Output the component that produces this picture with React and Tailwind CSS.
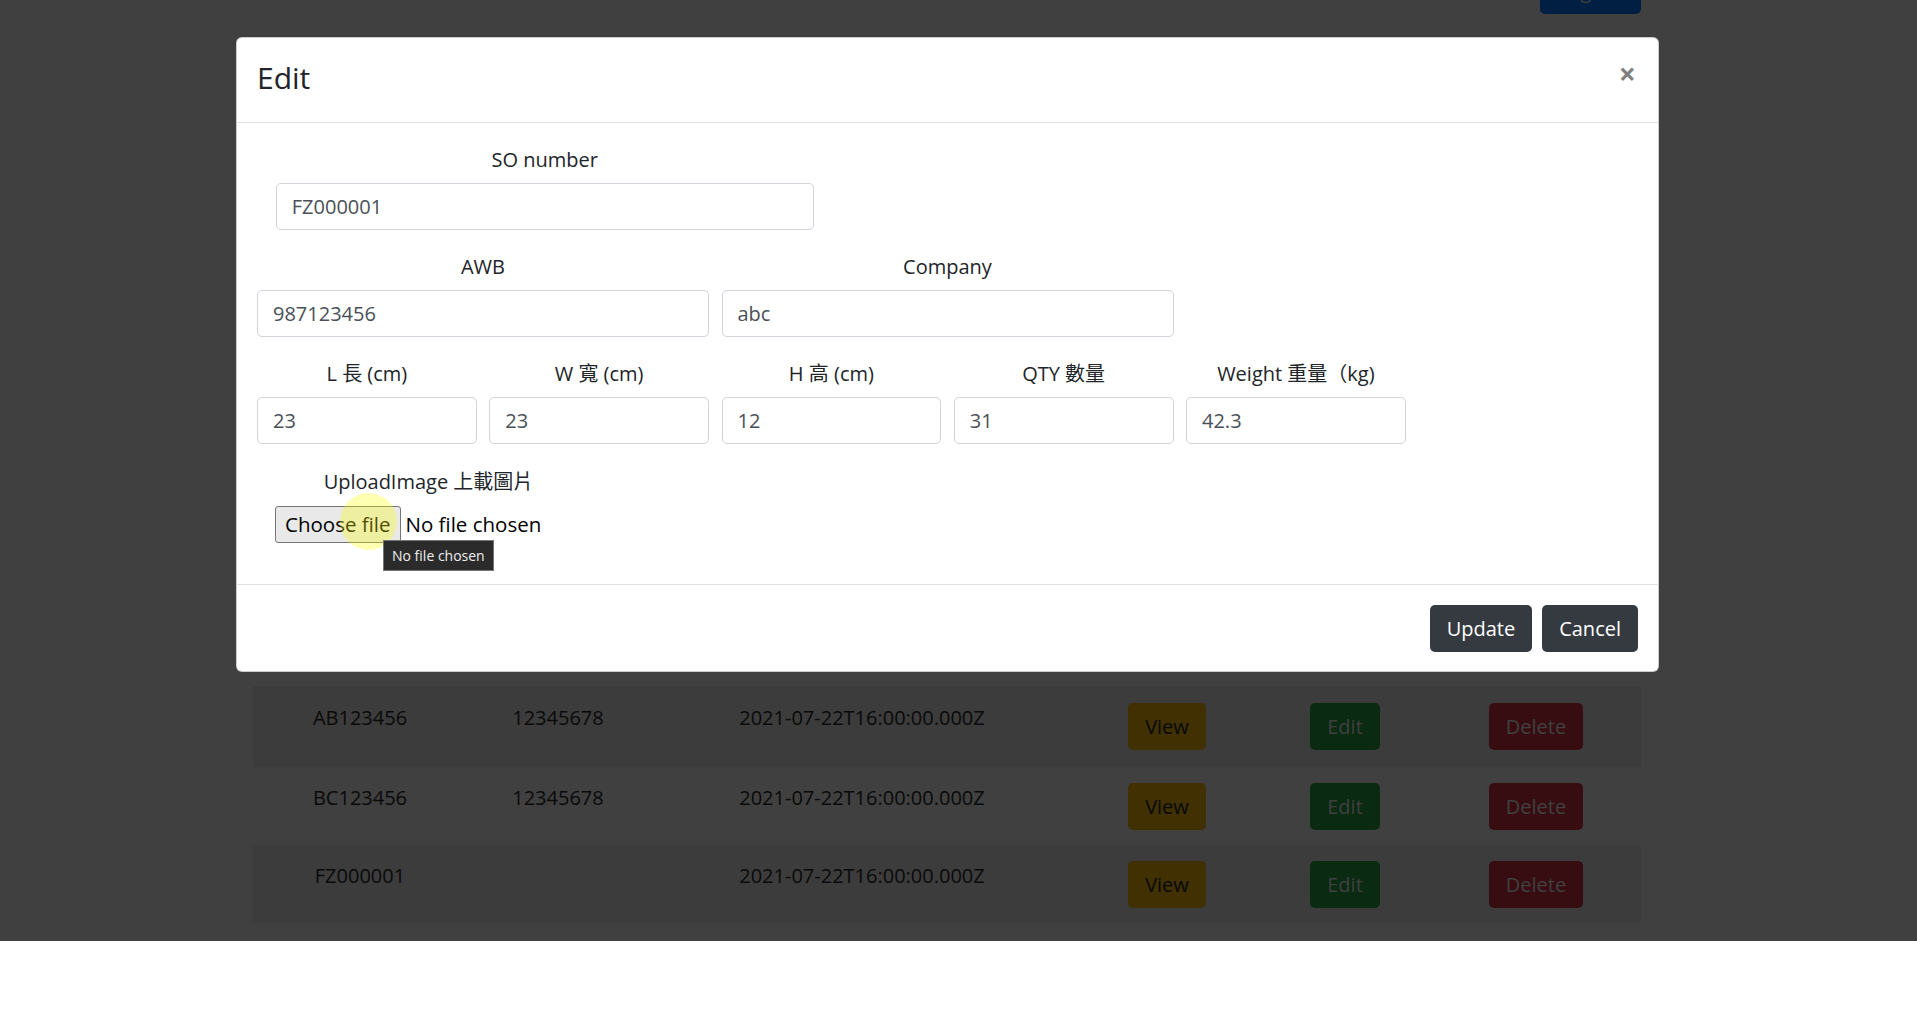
const FONT = "font-['Open_Sans','Noto_Sans_CJK_TC',sans-serif]";

const Field = ({ label, value, width }) => (
  <div className={width}>
    <div className="text-center leading-[30px] pt-[2px] mb-[8px]">{label}</div>
    <input
      readOnly
      value={value}
      className="w-full h-[47px] px-[15px] border border-[#ced4da] rounded-[5px] text-[20px] text-[#495057] bg-white outline-none"
    />
  </div>
);

const rows = [
  { so: 'AB123456', awb: '12345678', row: 'h-[81px] pt-[17px] bg-[#3c3c3c]' },
  { so: 'BC123456', awb: '12345678', row: 'h-[78px] pt-[16px] bg-[#404040]' },
  { so: 'FZ000001', awb: '', row: 'h-[78px] pt-[16px] bg-[#3c3c3c]' }
];

const cols = ['w-[214px]', 'w-[182px]', 'w-[426px]'];

export default function App() {
  return (
    <div className={`h-[1023px] bg-white text-[20px] text-[#212529] ${FONT}`}>
      <div className="h-[941px] bg-[#404040] flex flex-col">
        {/* page header button, mostly hidden above the fold */}
        <div className="h-[14px] flex items-end overflow-hidden pl-[1540px]">
          <button className="shrink-0 w-[101px] h-[47px] rounded-[5px] bg-[#001f42] text-[#404040] leading-[30px]">
            Logout
          </button>
        </div>

        {/* modal */}
        <div className="ml-[236px] mt-[23px] w-[1423px] bg-white border border-black/20 rounded-[6px]">
          <div className="h-[85px] flex justify-between items-start px-5 border-b border-[#dee2e6]">
            <h5 className="mt-[22px] text-[30px] leading-[36px] font-normal">Edit</h5>
            <button className="mt-[21px] mr-[2px] text-[30px] leading-[30px] font-bold text-black/50">
              ×
            </button>
          </div>

          <div className="p-5">
            <div className="ml-[18.75px] w-[538px] mb-5">
              <Field label="SO number" value="FZ000001" width="w-full" />
            </div>

            <div className="flex gap-[12.5px] mb-5">
              <Field label="AWB" value="987123456" width="w-[452px]" />
              <Field label="Company" value="abc" width="w-[452px]" />
            </div>

            <div className="flex gap-[12.5px] mb-5">
              <Field label="L 長 (cm)" value="23" width="w-[219.75px]" />
              <Field label="W 寬 (cm)" value="23" width="w-[219.75px]" />
              <Field label="H 高 (cm)" value="12" width="w-[219.75px]" />
              <Field label="QTY 數量" value="31" width="w-[219.75px]" />
              <Field label="Weight 重量（kg)" value="42.3" width="w-[219.75px]" />
            </div>

            <div className="mb-5">
              <div className="w-[343px] text-center leading-[30px] pt-[3px] mb-[8px]">UploadImage 上載圖片</div>
              <div className="relative h-[39px] flex items-center">
                <div className="ml-[18px] h-[37px] px-[9px] flex items-center bg-[#e9e9e9] border border-[#767676] rounded-[3px] text-[20.5px] text-black">
                  Choose file
                </div>
                <span className="ml-[5px] text-[20.5px] text-black">No file chosen</span>
                <div className="absolute left-[83px] top-[-12px] w-[57px] h-[57px] rounded-full bg-[rgba(255,255,0,0.3)]"></div>
                <div className="absolute left-[126px] top-[35px] h-[31px] px-[8px] flex items-center whitespace-nowrap bg-[#2b2b2b] border border-[#767676] text-[14px] text-[#eeeeee]">
                  No file chosen
                </div>
              </div>
            </div>
          </div>

          <div className="border-t border-[#dee2e6] flex justify-end gap-[10px] px-5 pt-5 pb-[19px]">
            <button className="h-[47px] px-[17px] rounded-[5px] bg-[#343a40] text-white leading-[30px]">Update</button>
            <button className="h-[47px] px-[17px] rounded-[5px] bg-[#343a40] text-white leading-[30px]">Cancel</button>
          </div>
        </div>

        {/* table behind the backdrop */}
        <div className="mt-[14px] ml-[253px] w-[1388px] text-[#0a0a0a]">
          {rows.map(r => (
            <div key={r.so} className={`flex items-start ${r.row}`}>
              <div className={`${cols[0]} text-center leading-[30px]`}>{r.so}</div>
              <div className={`${cols[1]} text-center leading-[30px]`}>{r.awb}</div>
              <div className={`${cols[2]} text-center leading-[30px]`}>2021-07-22T16:00:00.000Z</div>
              <div className="w-[184px] flex justify-center">
                <button className="h-[47px] px-[17px] rounded-[5px] bg-[#403002] text-[#080909] leading-[30px]">View</button>
              </div>
              <div className="w-[172px] flex justify-center">
                <button className="h-[47px] px-[17px] rounded-[5px] bg-[#0a2a11] text-[#404040] leading-[30px]">Edit</button>
              </div>
              <div className="w-[210px] flex justify-center">
                <button className="h-[47px] px-[17px] rounded-[5px] bg-[#370d11] text-[#404040] leading-[30px]">Delete</button>
              </div>
            </div>
          ))}
        </div>
      </div>
    </div>
  );
}
